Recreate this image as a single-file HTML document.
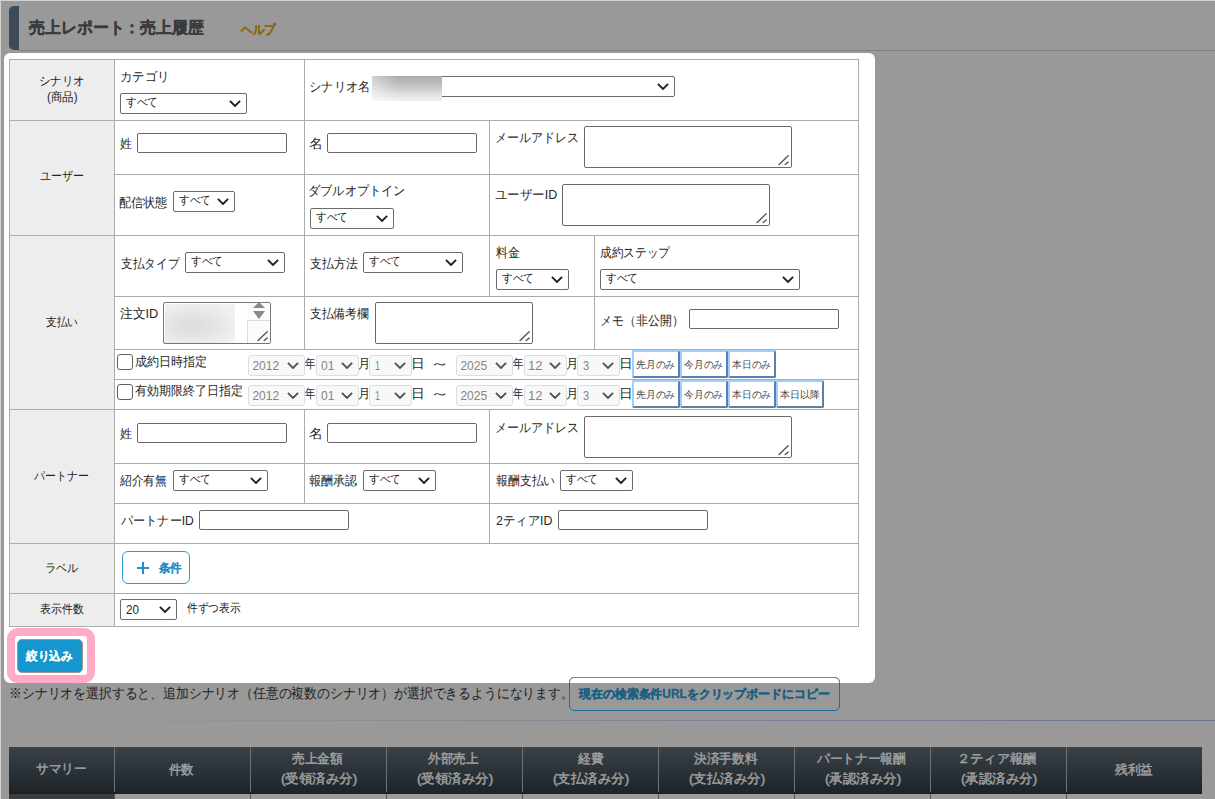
<!DOCTYPE html>
<html lang="ja"><head><meta charset="utf-8"><title>売上履歴</title>
<style>
html,body{margin:0;padding:0}
body{width:1215px;height:799px;overflow:hidden;position:relative;background:#999;font-family:"Liberation Sans",sans-serif;color:#333}
.t{position:absolute;white-space:nowrap}

</style></head><body>

<div class="g" style="position:absolute;left:0px;top:0px;width:1215px;height:1px;background:#d3d3d3"></div>
<div class="g" style="position:absolute;left:0px;top:0px;width:1px;height:799px;background:#d3d3d3"></div>
<div class="g" style="position:absolute;left:9px;top:6px;width:10px;height:44px;background:#3d4b58;border-radius:5px 0 0 5px"></div>
<div class="g" style="position:absolute;left:19px;top:50px;width:1196px;height:1px;background:#808080"></div>
<div id="title" class="t" style="left:29.00px;top:17.50px;font-size:16px;line-height:20px;color:#3a3a3a;font-weight:bold;-webkit-text-stroke:0.3px currentColor;transform:scaleX(0.9943);transform-origin:0 0;">売上レポート：売上履歴</div>
<div id="help" class="t" style="left:240.95px;top:21.00px;font-size:13px;line-height:17px;color:#86680f;font-weight:bold;-webkit-text-stroke:0.3px currentColor;transform:scaleX(0.8902);transform-origin:0 0;">ヘルプ</div>
<div class="g" style="position:absolute;left:3.6px;top:52.8px;width:871.9px;height:630.7px;background:#fff;border-radius:6px"></div>
<div class="g" style="position:absolute;left:10px;top:60px;width:104px;height:566px;background:#ededed"></div>
<div class="g" style="position:absolute;left:9px;top:59px;width:850px;height:1px;background:#ababab"></div>
<div class="g" style="position:absolute;left:9px;top:120px;width:850px;height:1px;background:#ababab"></div>
<div class="g" style="position:absolute;left:9px;top:235px;width:850px;height:1px;background:#ababab"></div>
<div class="g" style="position:absolute;left:9px;top:409px;width:850px;height:1px;background:#ababab"></div>
<div class="g" style="position:absolute;left:9px;top:543px;width:850px;height:1px;background:#ababab"></div>
<div class="g" style="position:absolute;left:9px;top:593px;width:850px;height:1px;background:#ababab"></div>
<div class="g" style="position:absolute;left:9px;top:626px;width:850px;height:1px;background:#ababab"></div>
<div class="g" style="position:absolute;left:114px;top:174px;width:745px;height:1px;background:#ababab"></div>
<div class="g" style="position:absolute;left:114px;top:296px;width:745px;height:1px;background:#ababab"></div>
<div class="g" style="position:absolute;left:114px;top:349px;width:745px;height:1px;background:#ababab"></div>
<div class="g" style="position:absolute;left:114px;top:379px;width:745px;height:1px;background:#ababab"></div>
<div class="g" style="position:absolute;left:114px;top:463px;width:745px;height:1px;background:#ababab"></div>
<div class="g" style="position:absolute;left:114px;top:503px;width:745px;height:1px;background:#ababab"></div>
<div class="g" style="position:absolute;left:9px;top:59px;width:1px;height:568px;background:#ababab"></div>
<div class="g" style="position:absolute;left:114px;top:59px;width:1px;height:568px;background:#ababab"></div>
<div class="g" style="position:absolute;left:858px;top:59px;width:1px;height:568px;background:#ababab"></div>
<div class="g" style="position:absolute;left:304px;top:59px;width:1px;height:291px;background:#ababab"></div>
<div class="g" style="position:absolute;left:304px;top:409px;width:1px;height:95px;background:#ababab"></div>
<div class="g" style="position:absolute;left:489px;top:120px;width:1px;height:177px;background:#ababab"></div>
<div class="g" style="position:absolute;left:489px;top:409px;width:1px;height:135px;background:#ababab"></div>
<div class="g" style="position:absolute;left:594px;top:235px;width:1px;height:115px;background:#ababab"></div>
<div id="l_scn" class="t" style="left:39.09px;top:72.50px;font-size:12px;line-height:16px;color:#222;font-weight:normal;transform:scaleX(0.9556);transform-origin:0 0;">シナリオ</div>
<div id="l_prod" class="t" style="left:47.02px;top:89.00px;font-size:12px;line-height:16px;color:#222;font-weight:normal;transform:scaleX(0.9516);transform-origin:0 0;">(商品)</div>
<div id="l_user" class="t" style="left:40.00px;top:168.00px;font-size:12px;line-height:16px;color:#222;font-weight:normal;transform:scaleX(0.9149);transform-origin:0 0;">ユーザー</div>
<div id="l_pay" class="t" style="left:46.00px;top:313.50px;font-size:12px;line-height:16px;color:#222;font-weight:normal;transform:scaleX(0.8889);transform-origin:0 0;">支払い</div>
<div id="l_partner" class="t" style="left:34.05px;top:467.50px;font-size:12px;line-height:16px;color:#222;font-weight:normal;transform:scaleX(0.9068);transform-origin:0 0;">パートナー</div>
<div id="l_label" class="t" style="left:45.11px;top:560.00px;font-size:12px;line-height:16px;color:#222;font-weight:normal;transform:scaleX(0.9286);transform-origin:0 0;">ラベル</div>
<div id="l_count" class="t" style="left:40.05px;top:601.00px;font-size:12px;line-height:16px;color:#222;font-weight:normal;transform:scaleX(0.9062);transform-origin:0 0;">表示件数</div>
<div id="cat" class="t" style="left:120.04px;top:67.50px;font-size:13px;line-height:17px;color:#262626;font-weight:normal;transform:scaleX(0.9583);transform-origin:0 0;">カテゴリ</div>
<div class="g" style="position:absolute;left:120px;top:93px;width:125px;height:19px;border:1px solid #6b6b6b;background:#fff;border-radius:2px;"><svg class="g" width="12" height="7" viewBox="0 0 12 7" style="position:absolute;right:5px;top:6.0px"><path d="M0.9 0.9 L6 6 L11.1 0.9" fill="none" stroke="#222" stroke-width="1.9"/></svg></div>
<div id="cat_s" class="t" style="left:126.00px;top:94.00px;font-size:12px;line-height:16px;color:#222;font-weight:normal;transform:scaleX(0.8857);transform-origin:0 0;">すべて</div>
<div id="scn" class="t" style="left:309.08px;top:78.00px;font-size:13px;line-height:17px;color:#262626;font-weight:normal;transform:scaleX(0.9435);transform-origin:0 0;">シナリオ名</div>
<div class="g" style="position:absolute;left:372px;top:76px;width:301px;height:19px;border:1px solid #6b6b6b;background:#fff;border-radius:2px;"><svg class="g" width="12" height="7" viewBox="0 0 12 7" style="position:absolute;right:5px;top:6.0px"><path d="M0.9 0.9 L6 6 L11.1 0.9" fill="none" stroke="#222" stroke-width="1.9"/></svg></div>
<div class="g" style="position:absolute;left:372px;top:76px;width:70px;height:25px;background:linear-gradient(90deg,rgba(255,255,255,.45) 0%,rgba(255,255,255,0) 35%),linear-gradient(180deg,#acacac 0%,#c4c4c4 40%,#e6e6e6 80%,#f2f2f2 100%)"></div>
<div id="u_sei" class="t" style="left:120.04px;top:135.00px;font-size:13px;line-height:17px;color:#262626;font-weight:normal;transform:scaleX(0.9231);transform-origin:0 0;">姓</div>
<div class="g" style="position:absolute;left:137px;top:133px;width:148px;height:18px;border:1px solid #686868;border-radius:2px;background:#fff"></div>
<div id="u_mei" class="t" style="left:309.38px;top:135.00px;font-size:13px;line-height:17px;color:#262626;font-weight:normal;transform:scaleX(1.0727);transform-origin:0 0;">名</div>
<div class="g" style="position:absolute;left:327px;top:133px;width:148px;height:18px;border:1px solid #686868;border-radius:2px;background:#fff"></div>
<div id="u_mail" class="t" style="left:495.08px;top:128.50px;font-size:13px;line-height:17px;color:#262626;font-weight:normal;transform:scaleX(0.9213);transform-origin:0 0;">メールアドレス</div>
<div class="g" style="position:absolute;left:584px;top:126px;width:206px;height:40px;border:1px solid #686868;border-radius:2px;background:#fff"><svg width="12" height="12" viewBox="0 0 12 12" style="position:absolute;right:1px;bottom:1px"><path d="M1.1 10.6 L10.2 1.8 M7.2 10.6 L10.2 7.9" stroke="#555" stroke-width="1.4" stroke-linecap="round" fill="none"/></svg></div>
<div id="u_haishin" class="t" style="left:119.49px;top:193.80px;font-size:13px;line-height:17px;color:#262626;font-weight:normal;transform:scaleX(0.9333);transform-origin:0 0;">配信状態</div>
<div class="g" style="position:absolute;left:173px;top:191px;width:60px;height:19px;border:1px solid #6b6b6b;background:#fff;border-radius:2px;"><svg class="g" width="12" height="7" viewBox="0 0 12 7" style="position:absolute;right:5px;top:6.0px"><path d="M0.9 0.9 L6 6 L11.1 0.9" fill="none" stroke="#222" stroke-width="1.9"/></svg></div>
<div id="u_haishin_s" class="t" style="left:179.00px;top:192.35px;font-size:12px;line-height:16px;color:#222;font-weight:normal;transform:scaleX(0.8857);transform-origin:0 0;">すべて</div>
<div id="u_dopt" class="t" style="left:308.12px;top:182.15px;font-size:13px;line-height:17px;color:#262626;font-weight:normal;transform:scaleX(0.9386);transform-origin:0 0;">ダブルオプトイン</div>
<div class="g" style="position:absolute;left:310px;top:208px;width:82px;height:19px;border:1px solid #6b6b6b;background:#fff;border-radius:2px;"><svg class="g" width="12" height="7" viewBox="0 0 12 7" style="position:absolute;right:5px;top:6.0px"><path d="M0.9 0.9 L6 6 L11.1 0.9" fill="none" stroke="#222" stroke-width="1.9"/></svg></div>
<div id="u_dopt_s" class="t" style="left:316.00px;top:209.35px;font-size:12px;line-height:16px;color:#222;font-weight:normal;transform:scaleX(0.8857);transform-origin:0 0;">すべて</div>
<div id="u_uid" class="t" style="left:495.02px;top:185.85px;font-size:13px;line-height:17px;color:#262626;font-weight:normal;transform:scaleX(0.9578);transform-origin:0 0;">ユーザーID</div>
<div class="g" style="position:absolute;left:562px;top:184px;width:206px;height:40px;border:1px solid #686868;border-radius:2px;background:#fff"><svg width="12" height="12" viewBox="0 0 12 12" style="position:absolute;right:1px;bottom:1px"><path d="M1.1 10.6 L10.2 1.8 M7.2 10.6 L10.2 7.9" stroke="#555" stroke-width="1.4" stroke-linecap="round" fill="none"/></svg></div>
<div id="p_type" class="t" style="left:121.00px;top:254.50px;font-size:13px;line-height:17px;color:#262626;font-weight:normal;transform:scaleX(0.8970);transform-origin:0 0;">支払タイプ</div>
<div class="g" style="position:absolute;left:185px;top:252px;width:98px;height:19px;border:1px solid #6b6b6b;background:#fff;border-radius:2px;"><svg class="g" width="12" height="7" viewBox="0 0 12 7" style="position:absolute;right:5px;top:6.0px"><path d="M0.9 0.9 L6 6 L11.1 0.9" fill="none" stroke="#222" stroke-width="1.9"/></svg></div>
<div id="p_type_s" class="t" style="left:191.00px;top:253.35px;font-size:12px;line-height:16px;color:#222;font-weight:normal;transform:scaleX(0.8857);transform-origin:0 0;">すべて</div>
<div id="p_method" class="t" style="left:310.19px;top:254.50px;font-size:13px;line-height:17px;color:#262626;font-weight:normal;transform:scaleX(0.9154);transform-origin:0 0;">支払方法</div>
<div class="g" style="position:absolute;left:363px;top:252px;width:98px;height:19px;border:1px solid #6b6b6b;background:#fff;border-radius:2px;"><svg class="g" width="12" height="7" viewBox="0 0 12 7" style="position:absolute;right:5px;top:6.0px"><path d="M0.9 0.9 L6 6 L11.1 0.9" fill="none" stroke="#222" stroke-width="1.9"/></svg></div>
<div id="p_method_s" class="t" style="left:369.00px;top:253.35px;font-size:12px;line-height:16px;color:#222;font-weight:normal;transform:scaleX(0.8857);transform-origin:0 0;">すべて</div>
<div id="p_fee" class="t" style="left:495.62px;top:244.00px;font-size:13px;line-height:17px;color:#262626;font-weight:normal;transform:scaleX(0.9038);transform-origin:0 0;">料金</div>
<div class="g" style="position:absolute;left:496px;top:269px;width:71px;height:19px;border:1px solid #6b6b6b;background:#fff;border-radius:2px;"><svg class="g" width="12" height="7" viewBox="0 0 12 7" style="position:absolute;right:5px;top:6.0px"><path d="M0.9 0.9 L6 6 L11.1 0.9" fill="none" stroke="#222" stroke-width="1.9"/></svg></div>
<div id="p_fee_s" class="t" style="left:502.00px;top:270.35px;font-size:12px;line-height:16px;color:#222;font-weight:normal;transform:scaleX(0.8857);transform-origin:0 0;">すべて</div>
<div id="p_step" class="t" style="left:600.00px;top:244.25px;font-size:13px;line-height:17px;color:#262626;font-weight:normal;transform:scaleX(0.8987);transform-origin:0 0;">成約ステップ</div>
<div class="g" style="position:absolute;left:600px;top:269px;width:198px;height:19px;border:1px solid #6b6b6b;background:#fff;border-radius:2px;"><svg class="g" width="12" height="7" viewBox="0 0 12 7" style="position:absolute;right:5px;top:6.0px"><path d="M0.9 0.9 L6 6 L11.1 0.9" fill="none" stroke="#222" stroke-width="1.9"/></svg></div>
<div id="p_step_s" class="t" style="left:606.00px;top:270.35px;font-size:12px;line-height:16px;color:#222;font-weight:normal;transform:scaleX(0.8857);transform-origin:0 0;">すべて</div>
<div id="p_order" class="t" style="left:120.41px;top:304.85px;font-size:13px;line-height:17px;color:#262626;font-weight:normal;transform:scaleX(0.9816);transform-origin:0 0;">注文ID</div>
<div class="g" style="position:absolute;left:163px;top:302px;width:106px;height:40px;border:1px solid #767676;border-radius:2px;background:#fff;overflow:hidden"><div style="position:absolute;left:1px;top:1px;width:70px;height:39px;background:radial-gradient(ellipse 70% 65% at 40% 55%,#dcdcdc 0%,#e4e4e4 45%,#f2f2f2 100%)"></div><div style="position:absolute;left:83px;top:0;width:23px;height:17px;background:#fbfbfb"></div><div style="position:absolute;left:89px;top:-1px;width:0;height:0;border-left:6px solid transparent;border-right:6px solid transparent;border-bottom:6px solid #888"></div><div style="position:absolute;left:89px;top:8px;width:0;height:0;border-left:6px solid transparent;border-right:6px solid transparent;border-top:8px solid #888"></div><div style="position:absolute;left:83px;top:17px;width:22px;height:22px;border-left:1px solid #dcdcdc;border-top:1px solid #dcdcdc;background:#fcfcfc"></div><svg width="12" height="12" viewBox="0 0 12 12" style="position:absolute;right:1px;bottom:1px"><path d="M1.1 10.6 L10.2 1.8 M7.2 10.6 L10.2 7.9" stroke="#555" stroke-width="1.4" stroke-linecap="round" fill="none"/></svg></div>
<div id="p_memo" class="t" style="left:310.24px;top:305.00px;font-size:13px;line-height:17px;color:#262626;font-weight:normal;transform:scaleX(0.9015);transform-origin:0 0;">支払備考欄</div>
<div class="g" style="position:absolute;left:375px;top:302px;width:156px;height:40px;border:1px solid #686868;border-radius:2px;background:#fff"><svg width="12" height="12" viewBox="0 0 12 12" style="position:absolute;right:1px;bottom:1px"><path d="M1.1 10.6 L10.2 1.8 M7.2 10.6 L10.2 7.9" stroke="#555" stroke-width="1.4" stroke-linecap="round" fill="none"/></svg></div>
<div id="p_memo2" class="t" style="left:600.47px;top:312.45px;font-size:13px;line-height:17px;color:#262626;font-weight:normal;transform:scaleX(0.9183);transform-origin:0 0;">メモ（非公開）</div>
<div class="g" style="position:absolute;left:689px;top:309px;width:148px;height:18px;border:1px solid #686868;border-radius:2px;background:#fff"></div>
<div class="g" style="position:absolute;left:117px;top:354px;width:15.5px;height:15.5px;box-sizing:border-box;border:1.2px solid #5f5f5f;border-radius:3px;background:#fff"></div>
<div id="d1_lab" class="t" style="left:135.00px;top:353.00px;font-size:13px;line-height:17px;color:#262626;font-weight:normal;transform:scaleX(0.9286);transform-origin:0 0;">成約日時指定</div>
<div class="g" style="position:absolute;left:248px;top:355px;width:55px;height:19px;border:1px solid #dedede;background:#f8f8f8;border-radius:3px;"><svg class="g" width="12" height="7" viewBox="0 0 12 7" style="position:absolute;right:5px;top:6.0px"><path d="M0.9 0.9 L6 6 L11.1 0.9" fill="none" stroke="#555" stroke-width="1.9"/></svg></div>
<div id="d1_y1" class="t" style="left:252.40px;top:357.50px;font-size:12px;line-height:16px;color:#858585;font-weight:normal;">2012</div>
<div id="d1_nen1" class="t" style="left:305.00px;top:355.25px;font-size:13px;line-height:17px;color:#262626;font-weight:normal;transform:scaleX(0.8000);transform-origin:0 0;">年</div>
<div class="g" style="position:absolute;left:316px;top:355px;width:41px;height:19px;border:1px solid #dedede;background:#f8f8f8;border-radius:3px;"><svg class="g" width="12" height="7" viewBox="0 0 12 7" style="position:absolute;right:5px;top:6.0px"><path d="M0.9 0.9 L6 6 L11.1 0.9" fill="none" stroke="#555" stroke-width="1.9"/></svg></div>
<div id="d1_m1" class="t" style="left:321.00px;top:357.50px;font-size:12px;line-height:16px;color:#858585;font-weight:normal;">01</div>
<div id="d1_tsuki1" class="t" style="left:358.05px;top:355.25px;font-size:13px;line-height:17px;color:#262626;font-weight:normal;transform:scaleX(0.9500);transform-origin:0 0;">月</div>
<div class="g" style="position:absolute;left:369px;top:355px;width:41px;height:19px;border:1px solid #dedede;background:#f8f8f8;border-radius:3px;"><svg class="g" width="12" height="7" viewBox="0 0 12 7" style="position:absolute;right:5px;top:6.0px"><path d="M0.9 0.9 L6 6 L11.1 0.9" fill="none" stroke="#555" stroke-width="1.9"/></svg></div>
<div id="d1_d1" class="t" style="left:375.12px;top:357.50px;font-size:12px;line-height:16px;color:#858585;font-weight:normal;transform:scaleX(0.7500);transform-origin:0 0;">1</div>
<div id="d1_hi1" class="t" style="left:410.89px;top:355.25px;font-size:13px;line-height:17px;color:#262626;font-weight:normal;transform:scaleX(1.0556);transform-origin:0 0;">日</div>
<div id="d1_tilde" class="t" style="left:430.25px;top:354.50px;font-size:13px;line-height:17px;color:#262626;font-weight:normal;transform:scaleX(1.5000);transform-origin:0 0;">～</div>
<div class="g" style="position:absolute;left:456px;top:355px;width:55px;height:19px;border:1px solid #dedede;background:#f8f8f8;border-radius:3px;"><svg class="g" width="12" height="7" viewBox="0 0 12 7" style="position:absolute;right:5px;top:6.0px"><path d="M0.9 0.9 L6 6 L11.1 0.9" fill="none" stroke="#555" stroke-width="1.9"/></svg></div>
<div id="d1_y2" class="t" style="left:460.40px;top:357.50px;font-size:12px;line-height:16px;color:#858585;font-weight:normal;">2025</div>
<div id="d1_nen2" class="t" style="left:513.00px;top:355.25px;font-size:13px;line-height:17px;color:#262626;font-weight:normal;transform:scaleX(0.8000);transform-origin:0 0;">年</div>
<div class="g" style="position:absolute;left:524px;top:355px;width:41px;height:19px;border:1px solid #dedede;background:#f8f8f8;border-radius:3px;"><svg class="g" width="12" height="7" viewBox="0 0 12 7" style="position:absolute;right:5px;top:6.0px"><path d="M0.9 0.9 L6 6 L11.1 0.9" fill="none" stroke="#555" stroke-width="1.9"/></svg></div>
<div id="d1_m2" class="t" style="left:527.92px;top:357.50px;font-size:12px;line-height:16px;color:#858585;font-weight:normal;transform:scaleX(1.0833);transform-origin:0 0;">12</div>
<div id="d1_tsuki2" class="t" style="left:566.05px;top:355.25px;font-size:13px;line-height:17px;color:#262626;font-weight:normal;transform:scaleX(0.9500);transform-origin:0 0;">月</div>
<div class="g" style="position:absolute;left:577px;top:355px;width:41px;height:19px;border:1px solid #dedede;background:#f8f8f8;border-radius:3px;"><svg class="g" width="12" height="7" viewBox="0 0 12 7" style="position:absolute;right:5px;top:6.0px"><path d="M0.9 0.9 L6 6 L11.1 0.9" fill="none" stroke="#555" stroke-width="1.9"/></svg></div>
<div id="d1_d2" class="t" style="left:583.00px;top:357.50px;font-size:12px;line-height:16px;color:#858585;font-weight:normal;transform:scaleX(0.9286);transform-origin:0 0;">3</div>
<div id="d1_hi2" class="t" style="left:618.89px;top:355.25px;font-size:13px;line-height:17px;color:#262626;font-weight:normal;transform:scaleX(1.0556);transform-origin:0 0;">日</div>
<div class="g" style="position:absolute;left:632px;top:350px;width:44px;height:24px;background:#fff;border:2px solid;border-color:#9fd0fb #5b80a8 #5b80a8 #9fd0fb;border-radius:2px"></div>
<div id="d1_b0" class="t" style="left:636.00px;top:358.00px;font-size:10px;line-height:14px;color:#444;font-weight:normal;transform:scaleX(0.9750);transform-origin:0 0;">先月のみ</div>
<div class="g" style="position:absolute;left:680px;top:350px;width:44px;height:24px;background:#fff;border:2px solid;border-color:#9fd0fb #5b80a8 #5b80a8 #9fd0fb;border-radius:2px"></div>
<div id="d1_b1" class="t" style="left:684.00px;top:358.00px;font-size:10px;line-height:14px;color:#444;font-weight:normal;transform:scaleX(0.9750);transform-origin:0 0;">今月のみ</div>
<div class="g" style="position:absolute;left:728px;top:350px;width:44px;height:24px;background:#fff;border:2px solid;border-color:#9fd0fb #5b80a8 #5b80a8 #9fd0fb;border-radius:2px"></div>
<div id="d1_b2" class="t" style="left:732.00px;top:358.00px;font-size:10px;line-height:14px;color:#444;font-weight:normal;transform:scaleX(0.9750);transform-origin:0 0;">本日のみ</div>
<div class="g" style="position:absolute;left:117px;top:384px;width:15.5px;height:15.5px;box-sizing:border-box;border:1.2px solid #5f5f5f;border-radius:3px;background:#fff"></div>
<div id="d2_lab" class="t" style="left:135.00px;top:382.35px;font-size:13px;line-height:17px;color:#262626;font-weight:normal;transform:scaleX(0.9224);transform-origin:0 0;">有効期限終了日指定</div>
<div class="g" style="position:absolute;left:248px;top:385px;width:55px;height:19px;border:1px solid #dedede;background:#f8f8f8;border-radius:3px;"><svg class="g" width="12" height="7" viewBox="0 0 12 7" style="position:absolute;right:5px;top:6.0px"><path d="M0.9 0.9 L6 6 L11.1 0.9" fill="none" stroke="#555" stroke-width="1.9"/></svg></div>
<div id="d2_y1" class="t" style="left:252.40px;top:387.50px;font-size:12px;line-height:16px;color:#858585;font-weight:normal;">2012</div>
<div id="d2_nen1" class="t" style="left:305.00px;top:385.25px;font-size:13px;line-height:17px;color:#262626;font-weight:normal;transform:scaleX(0.8000);transform-origin:0 0;">年</div>
<div class="g" style="position:absolute;left:316px;top:385px;width:41px;height:19px;border:1px solid #dedede;background:#f8f8f8;border-radius:3px;"><svg class="g" width="12" height="7" viewBox="0 0 12 7" style="position:absolute;right:5px;top:6.0px"><path d="M0.9 0.9 L6 6 L11.1 0.9" fill="none" stroke="#555" stroke-width="1.9"/></svg></div>
<div id="d2_m1" class="t" style="left:321.00px;top:387.50px;font-size:12px;line-height:16px;color:#858585;font-weight:normal;">01</div>
<div id="d2_tsuki1" class="t" style="left:358.05px;top:385.25px;font-size:13px;line-height:17px;color:#262626;font-weight:normal;transform:scaleX(0.9500);transform-origin:0 0;">月</div>
<div class="g" style="position:absolute;left:369px;top:385px;width:41px;height:19px;border:1px solid #dedede;background:#f8f8f8;border-radius:3px;"><svg class="g" width="12" height="7" viewBox="0 0 12 7" style="position:absolute;right:5px;top:6.0px"><path d="M0.9 0.9 L6 6 L11.1 0.9" fill="none" stroke="#555" stroke-width="1.9"/></svg></div>
<div id="d2_d1" class="t" style="left:375.12px;top:387.50px;font-size:12px;line-height:16px;color:#858585;font-weight:normal;transform:scaleX(0.7500);transform-origin:0 0;">1</div>
<div id="d2_hi1" class="t" style="left:410.89px;top:385.25px;font-size:13px;line-height:17px;color:#262626;font-weight:normal;transform:scaleX(1.0556);transform-origin:0 0;">日</div>
<div id="d2_tilde" class="t" style="left:430.25px;top:384.50px;font-size:13px;line-height:17px;color:#262626;font-weight:normal;transform:scaleX(1.5000);transform-origin:0 0;">～</div>
<div class="g" style="position:absolute;left:456px;top:385px;width:55px;height:19px;border:1px solid #dedede;background:#f8f8f8;border-radius:3px;"><svg class="g" width="12" height="7" viewBox="0 0 12 7" style="position:absolute;right:5px;top:6.0px"><path d="M0.9 0.9 L6 6 L11.1 0.9" fill="none" stroke="#555" stroke-width="1.9"/></svg></div>
<div id="d2_y2" class="t" style="left:460.40px;top:387.50px;font-size:12px;line-height:16px;color:#858585;font-weight:normal;">2025</div>
<div id="d2_nen2" class="t" style="left:513.00px;top:385.25px;font-size:13px;line-height:17px;color:#262626;font-weight:normal;transform:scaleX(0.8000);transform-origin:0 0;">年</div>
<div class="g" style="position:absolute;left:524px;top:385px;width:41px;height:19px;border:1px solid #dedede;background:#f8f8f8;border-radius:3px;"><svg class="g" width="12" height="7" viewBox="0 0 12 7" style="position:absolute;right:5px;top:6.0px"><path d="M0.9 0.9 L6 6 L11.1 0.9" fill="none" stroke="#555" stroke-width="1.9"/></svg></div>
<div id="d2_m2" class="t" style="left:527.92px;top:387.50px;font-size:12px;line-height:16px;color:#858585;font-weight:normal;transform:scaleX(1.0833);transform-origin:0 0;">12</div>
<div id="d2_tsuki2" class="t" style="left:566.05px;top:385.25px;font-size:13px;line-height:17px;color:#262626;font-weight:normal;transform:scaleX(0.9500);transform-origin:0 0;">月</div>
<div class="g" style="position:absolute;left:577px;top:385px;width:41px;height:19px;border:1px solid #dedede;background:#f8f8f8;border-radius:3px;"><svg class="g" width="12" height="7" viewBox="0 0 12 7" style="position:absolute;right:5px;top:6.0px"><path d="M0.9 0.9 L6 6 L11.1 0.9" fill="none" stroke="#555" stroke-width="1.9"/></svg></div>
<div id="d2_d2" class="t" style="left:583.00px;top:387.50px;font-size:12px;line-height:16px;color:#858585;font-weight:normal;transform:scaleX(0.9286);transform-origin:0 0;">3</div>
<div id="d2_hi2" class="t" style="left:618.89px;top:385.25px;font-size:13px;line-height:17px;color:#262626;font-weight:normal;transform:scaleX(1.0556);transform-origin:0 0;">日</div>
<div class="g" style="position:absolute;left:632px;top:380px;width:44px;height:24px;background:#fff;border:2px solid;border-color:#9fd0fb #5b80a8 #5b80a8 #9fd0fb;border-radius:2px"></div>
<div id="d2_b0" class="t" style="left:636.00px;top:388.00px;font-size:10px;line-height:14px;color:#444;font-weight:normal;transform:scaleX(0.9750);transform-origin:0 0;">先月のみ</div>
<div class="g" style="position:absolute;left:680px;top:380px;width:44px;height:24px;background:#fff;border:2px solid;border-color:#9fd0fb #5b80a8 #5b80a8 #9fd0fb;border-radius:2px"></div>
<div id="d2_b1" class="t" style="left:684.00px;top:388.00px;font-size:10px;line-height:14px;color:#444;font-weight:normal;transform:scaleX(0.9750);transform-origin:0 0;">今月のみ</div>
<div class="g" style="position:absolute;left:728px;top:380px;width:44px;height:24px;background:#fff;border:2px solid;border-color:#9fd0fb #5b80a8 #5b80a8 #9fd0fb;border-radius:2px"></div>
<div id="d2_b2" class="t" style="left:732.00px;top:388.00px;font-size:10px;line-height:14px;color:#444;font-weight:normal;transform:scaleX(0.9750);transform-origin:0 0;">本日のみ</div>
<div class="g" style="position:absolute;left:776px;top:380px;width:44px;height:24px;background:#fff;border:2px solid;border-color:#9fd0fb #5b80a8 #5b80a8 #9fd0fb;border-radius:2px"></div>
<div id="d2_b3" class="t" style="left:780.00px;top:388.00px;font-size:10px;line-height:14px;color:#444;font-weight:normal;">本日以降</div>
<div id="r_sei" class="t" style="left:120.04px;top:425.00px;font-size:13px;line-height:17px;color:#262626;font-weight:normal;transform:scaleX(0.9231);transform-origin:0 0;">姓</div>
<div class="g" style="position:absolute;left:137px;top:423px;width:148px;height:18px;border:1px solid #686868;border-radius:2px;background:#fff"></div>
<div id="r_mei" class="t" style="left:309.38px;top:425.00px;font-size:13px;line-height:17px;color:#262626;font-weight:normal;transform:scaleX(1.0727);transform-origin:0 0;">名</div>
<div class="g" style="position:absolute;left:327px;top:423px;width:148px;height:18px;border:1px solid #686868;border-radius:2px;background:#fff"></div>
<div id="r_mail" class="t" style="left:495.08px;top:418.50px;font-size:13px;line-height:17px;color:#262626;font-weight:normal;transform:scaleX(0.9213);transform-origin:0 0;">メールアドレス</div>
<div class="g" style="position:absolute;left:584px;top:416px;width:206px;height:40px;border:1px solid #686868;border-radius:2px;background:#fff"><svg width="12" height="12" viewBox="0 0 12 12" style="position:absolute;right:1px;bottom:1px"><path d="M1.1 10.6 L10.2 1.8 M7.2 10.6 L10.2 7.9" stroke="#555" stroke-width="1.4" stroke-linecap="round" fill="none"/></svg></div>
<div id="r_intro" class="t" style="left:120.05px;top:472.25px;font-size:13px;line-height:17px;color:#262626;font-weight:normal;transform:scaleX(0.9038);transform-origin:0 0;">紹介有無</div>
<div class="g" style="position:absolute;left:173px;top:470px;width:93px;height:19px;border:1px solid #6b6b6b;background:#fff;border-radius:2px;"><svg class="g" width="12" height="7" viewBox="0 0 12 7" style="position:absolute;right:5px;top:6.0px"><path d="M0.9 0.9 L6 6 L11.1 0.9" fill="none" stroke="#222" stroke-width="1.9"/></svg></div>
<div id="r_intro_s" class="t" style="left:179.00px;top:471.35px;font-size:12px;line-height:16px;color:#222;font-weight:normal;transform:scaleX(0.8857);transform-origin:0 0;">すべて</div>
<div id="r_appr" class="t" style="left:309.42px;top:472.25px;font-size:13px;line-height:17px;color:#262626;font-weight:normal;transform:scaleX(0.9269);transform-origin:0 0;">報酬承認</div>
<div class="g" style="position:absolute;left:363px;top:470px;width:71px;height:19px;border:1px solid #6b6b6b;background:#fff;border-radius:2px;"><svg class="g" width="12" height="7" viewBox="0 0 12 7" style="position:absolute;right:5px;top:6.0px"><path d="M0.9 0.9 L6 6 L11.1 0.9" fill="none" stroke="#222" stroke-width="1.9"/></svg></div>
<div id="r_appr_s" class="t" style="left:369.00px;top:471.35px;font-size:12px;line-height:16px;color:#222;font-weight:normal;transform:scaleX(0.8857);transform-origin:0 0;">すべて</div>
<div id="r_pay" class="t" style="left:495.81px;top:472.10px;font-size:13px;line-height:17px;color:#262626;font-weight:normal;transform:scaleX(0.9123);transform-origin:0 0;">報酬支払い</div>
<div class="g" style="position:absolute;left:560px;top:470px;width:71px;height:19px;border:1px solid #6b6b6b;background:#fff;border-radius:2px;"><svg class="g" width="12" height="7" viewBox="0 0 12 7" style="position:absolute;right:5px;top:6.0px"><path d="M0.9 0.9 L6 6 L11.1 0.9" fill="none" stroke="#222" stroke-width="1.9"/></svg></div>
<div id="r_pay_s" class="t" style="left:566.00px;top:471.35px;font-size:12px;line-height:16px;color:#222;font-weight:normal;transform:scaleX(0.8857);transform-origin:0 0;">すべて</div>
<div id="r_pid" class="t" style="left:120.58px;top:512.15px;font-size:13px;line-height:17px;color:#262626;font-weight:normal;transform:scaleX(0.9346);transform-origin:0 0;">パートナーID</div>
<div class="g" style="position:absolute;left:199px;top:510px;width:148px;height:18px;border:1px solid #686868;border-radius:2px;background:#fff"></div>
<div id="r_tid" class="t" style="left:495.80px;top:512.20px;font-size:13px;line-height:17px;color:#262626;font-weight:normal;transform:scaleX(0.9542);transform-origin:0 0;">2ティアID</div>
<div class="g" style="position:absolute;left:558px;top:510px;width:148px;height:18px;border:1px solid #686868;border-radius:2px;background:#fff"></div>
<div class="g" style="position:absolute;left:122px;top:551px;width:66px;height:31px;border:1.5px solid #2a9bd2;border-radius:6px;background:#fff"></div>
<div class="g" style="position:absolute;left:136.5px;top:567px;width:12.5px;height:2px;background:#1d8fcc"></div>
<div class="g" style="position:absolute;left:141.8px;top:562px;width:2px;height:12px;background:#1d8fcc"></div>
<div id="cond" class="t" style="left:158.61px;top:560.05px;font-size:12px;line-height:16px;color:#1d8fcc;font-weight:bold;-webkit-text-stroke:0.1px currentColor;transform:scaleX(0.9583);transform-origin:0 0;">条件</div>
<div class="g" style="position:absolute;left:120px;top:599px;width:55px;height:19px;border:1px solid #6b6b6b;background:#fff;border-radius:2px;"><svg class="g" width="12" height="7" viewBox="0 0 12 7" style="position:absolute;right:5px;top:6.0px"><path d="M0.9 0.9 L6 6 L11.1 0.9" fill="none" stroke="#222" stroke-width="1.9"/></svg></div>
<div id="cnt_s" class="t" style="left:126.00px;top:601.50px;font-size:12px;line-height:16px;color:#222;font-weight:normal;transform:scaleX(0.9692);transform-origin:0 0;">20</div>
<div id="cnt_t" class="t" style="left:187.00px;top:600.25px;font-size:12px;line-height:16px;color:#262626;font-weight:normal;transform:scaleX(0.8933);transform-origin:0 0;">件ずつ表示</div>
<div class="g" style="position:absolute;left:6.5px;top:627.5px;width:88px;height:55px;box-sizing:border-box;border:8px solid #ffabc7;border-radius:11px"></div>
<div class="g" style="position:absolute;left:17px;top:639px;width:64px;height:32px;background:#1596ce;border:1px solid #a8958a;border-radius:5px"></div>
<div id="search" class="t" style="left:26.38px;top:648.00px;font-size:12px;line-height:16px;color:#fff;font-weight:bold;-webkit-text-stroke:0.1px currentColor;transform:scaleX(0.9673);transform-origin:0 0;">絞り込み</div>
<div id="note" class="t" style="left:8.74px;top:684.25px;font-size:14px;line-height:18px;color:#1e1e1e;font-weight:normal;transform:scaleX(0.9169);transform-origin:0 0;">※シナリオを選択すると、追加シナリオ（任意の複数のシナリオ）が選択できるようになります。</div>
<div class="g" style="position:absolute;left:569px;top:677px;width:269px;height:32px;border:1px solid #1a6f99;border-radius:5px"></div>
<div class="g" style="position:absolute;left:569px;top:677px;width:269px;height:32px;border:1px solid #2b9fd6;border-radius:5px;clip-path:inset(0 0 28px 0)"></div>
<div id="copy" class="t" style="left:579.39px;top:685.75px;font-size:12px;line-height:16px;color:#1a5f82;font-weight:bold;-webkit-text-stroke:0.3px currentColor;transform:scaleX(0.9917);transform-origin:0 0;">現在の検索条件URLをクリップボードにコピー</div>
<div class="g" style="position:absolute;left:9px;top:720px;width:1206px;height:1px;background:linear-gradient(90deg,rgba(104,116,146,0) 0%,rgba(104,116,146,.45) 45%,rgba(104,116,146,1) 100%)"></div>
<div class="g" style="position:absolute;left:9px;top:747px;width:1193px;height:45px;background:linear-gradient(#3b4247,#1e252a)"></div>
<div class="g" style="position:absolute;left:9px;top:792px;width:1193px;height:2px;background:#202020"></div>
<div class="g" style="position:absolute;left:9px;top:794px;width:105px;height:5px;background:#3a3d40"></div>
<div class="g" style="position:absolute;left:114px;top:794px;width:1088px;height:5px;background:#9c9c9c"></div>
<div class="g" style="position:absolute;left:114px;top:747px;width:1px;height:45px;background:#6c7175"></div>
<div class="g" style="position:absolute;left:114px;top:794px;width:1px;height:5px;background:#555"></div>
<div class="g" style="position:absolute;left:250px;top:747px;width:1px;height:45px;background:#6c7175"></div>
<div class="g" style="position:absolute;left:250px;top:794px;width:1px;height:5px;background:#555"></div>
<div class="g" style="position:absolute;left:386px;top:747px;width:1px;height:45px;background:#6c7175"></div>
<div class="g" style="position:absolute;left:386px;top:794px;width:1px;height:5px;background:#555"></div>
<div class="g" style="position:absolute;left:522px;top:747px;width:1px;height:45px;background:#6c7175"></div>
<div class="g" style="position:absolute;left:522px;top:794px;width:1px;height:5px;background:#555"></div>
<div class="g" style="position:absolute;left:658px;top:747px;width:1px;height:45px;background:#6c7175"></div>
<div class="g" style="position:absolute;left:658px;top:794px;width:1px;height:5px;background:#555"></div>
<div class="g" style="position:absolute;left:794px;top:747px;width:1px;height:45px;background:#6c7175"></div>
<div class="g" style="position:absolute;left:794px;top:794px;width:1px;height:5px;background:#555"></div>
<div class="g" style="position:absolute;left:930px;top:747px;width:1px;height:45px;background:#6c7175"></div>
<div class="g" style="position:absolute;left:930px;top:794px;width:1px;height:5px;background:#555"></div>
<div class="g" style="position:absolute;left:1066px;top:747px;width:1px;height:45px;background:#6c7175"></div>
<div class="g" style="position:absolute;left:1066px;top:794px;width:1px;height:5px;background:#555"></div>
<div id="sh0" class="t" style="left:36.39px;top:760.25px;font-size:13px;line-height:17px;color:#a0a0a0;font-weight:normal;-webkit-text-stroke:0.45px currentColor;transform:scaleX(0.9731);transform-origin:0 0;">サマリー</div>
<div id="sh1" class="t" style="left:169.02px;top:760.75px;font-size:13px;line-height:17px;color:#a0a0a0;font-weight:normal;-webkit-text-stroke:0.45px currentColor;transform:scaleX(0.9615);transform-origin:0 0;">件数</div>
<div id="sh2a" class="t" style="left:292.21px;top:749.90px;font-size:13px;line-height:17px;color:#a0a0a0;font-weight:normal;-webkit-text-stroke:0.45px currentColor;transform:scaleX(0.9769);transform-origin:0 0;">売上金額</div>
<div id="sh2b" class="t" style="left:280.98px;top:769.80px;font-size:13px;line-height:17px;color:#a0a0a0;font-weight:normal;-webkit-text-stroke:0.45px currentColor;transform:scaleX(1.0342);transform-origin:0 0;">(受領済み分)</div>
<div id="sh3a" class="t" style="left:428.21px;top:749.90px;font-size:13px;line-height:17px;color:#a0a0a0;font-weight:normal;-webkit-text-stroke:0.45px currentColor;transform:scaleX(0.9769);transform-origin:0 0;">外部売上</div>
<div id="sh3b" class="t" style="left:416.98px;top:769.80px;font-size:13px;line-height:17px;color:#a0a0a0;font-weight:normal;-webkit-text-stroke:0.45px currentColor;transform:scaleX(1.0342);transform-origin:0 0;">(受領済み分)</div>
<div id="sh4a" class="t" style="left:577.59px;top:749.90px;font-size:13px;line-height:17px;color:#a0a0a0;font-weight:normal;-webkit-text-stroke:0.45px currentColor;transform:scaleX(0.9769);transform-origin:0 0;">経費</div>
<div id="sh4b" class="t" style="left:552.98px;top:769.80px;font-size:13px;line-height:17px;color:#a0a0a0;font-weight:normal;-webkit-text-stroke:0.45px currentColor;transform:scaleX(1.0342);transform-origin:0 0;">(支払済み分)</div>
<div id="sh5a" class="t" style="left:694.49px;top:749.90px;font-size:13px;line-height:17px;color:#a0a0a0;font-weight:normal;-webkit-text-stroke:0.45px currentColor;transform:scaleX(0.9769);transform-origin:0 0;">決済手数料</div>
<div id="sh5b" class="t" style="left:688.98px;top:769.80px;font-size:13px;line-height:17px;color:#a0a0a0;font-weight:normal;-webkit-text-stroke:0.45px currentColor;transform:scaleX(1.0342);transform-origin:0 0;">(支払済み分)</div>
<div id="sh6a" class="t" style="left:817.11px;top:749.90px;font-size:13px;line-height:17px;color:#a0a0a0;font-weight:normal;-webkit-text-stroke:0.45px currentColor;transform:scaleX(0.9769);transform-origin:0 0;">パートナー報酬</div>
<div id="sh6b" class="t" style="left:824.98px;top:769.80px;font-size:13px;line-height:17px;color:#a0a0a0;font-weight:normal;-webkit-text-stroke:0.45px currentColor;transform:scaleX(1.0342);transform-origin:0 0;">(承認済み分)</div>
<div id="sh7a" class="t" style="left:956.75px;top:749.90px;font-size:13px;line-height:17px;color:#a0a0a0;font-weight:normal;-webkit-text-stroke:0.45px currentColor;transform:scaleX(1.0160);transform-origin:0 0;">２ティア報酬</div>
<div id="sh7b" class="t" style="left:960.98px;top:769.80px;font-size:13px;line-height:17px;color:#a0a0a0;font-weight:normal;-webkit-text-stroke:0.45px currentColor;transform:scaleX(1.0342);transform-origin:0 0;">(承認済み分)</div>
<div id="sh8" class="t" style="left:1115.00px;top:760.75px;font-size:13px;line-height:17px;color:#a0a0a0;font-weight:normal;-webkit-text-stroke:0.45px currentColor;transform:scaleX(0.9744);transform-origin:0 0;">残利益</div>
</body></html>
